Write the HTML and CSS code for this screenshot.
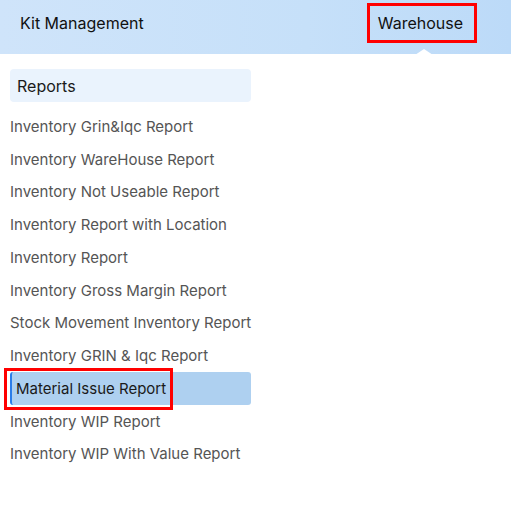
FILE: index.html
```html
<!DOCTYPE html>
<html>
<head>
<meta charset="utf-8">
<link rel="stylesheet" href="styles.css">
</head>
<body>
<header class="topbar">
  <div class="tab">Kit Management</div>
  <div class="tab tab-active"><span class="hl hl-warehouse">Warehouse</span><span class="caret"></span></div>
</header>
<aside class="sidebar">
  <div class="section-title">Reports</div>
  <ul class="menu">
    <li class="item">Inventory Grin&amp;Iqc Report</li>
    <li class="item">Inventory WareHouse Report</li>
    <li class="item">Inventory Not Useable Report</li>
    <li class="item">Inventory Report with Location</li>
    <li class="item">Inventory Report</li>
    <li class="item">Inventory Gross Margin Report</li>
    <li class="item">Stock Movement Inventory Report</li>
    <li class="item">Inventory GRIN &amp; Iqc Report</li>
    <li class="item item-active"><span class="hl hl-item">Material Issue Report</span></li>
    <li class="item">Inventory WIP Report</li>
    <li class="item">Inventory WIP With Value Report</li>
  </ul>
</aside>
</body>
</html>
```
FILE: styles.css
```css
* { box-sizing: border-box; }
html, body { margin: 0; padding: 0; background: #fff; }
body {
  font-family: Inter, "Noto Sans", sans-serif;
  width: 511px;
  height: 515px;
  overflow: hidden;
}
.topbar {
  height: 54px;
  background: linear-gradient(90deg, #cfe4fa 0%, #c6e0f9 60%, #bcdaf8 100%);
  display: flex;
  align-items: center;
  justify-content: space-between;
  padding: 0 48px 0 20px;
  font-size: 16px;
  color: #111;
}
.tab { position: relative; line-height: 20px; padding-bottom: 8px; }
.hl {
  position: relative;
}
.hl::after {
  content: "";
  position: absolute;
  border: 3px solid #f00;
}
.hl-warehouse::after { left: -11px; right: -14px; top: -10px; bottom: -10px; }
.caret {
  position: absolute;
  left: 31px;
  top: 36px;
  width: 0; height: 0;
  border-left: 15px solid transparent;
  border-right: 15px solid transparent;
  border-bottom: 10px solid #fff;
}
.sidebar {
  width: 241px;
  margin: 15px 0 0 10px;
}
.section-title {
  height: 33px;
  background: #eaf3fd;
  border-radius: 4px;
  padding-left: 7px;
  display: flex;
  align-items: center;
  font-size: 16px;
  color: #1a1a1a;
  margin-bottom: 8px;
}
.menu { list-style: none; margin: 0; padding: 0; }
.item {
  height: 32.75px;
  display: flex;
  align-items: center;
  font-size: 15px;
  color: #555;
  white-space: nowrap;
}
.item-active {
  background: #aed0f0;
  border-radius: 3px;
  border-left: 2px solid #2b7de9;
  padding-left: 4px;
  color: #1a1a1a;
}
.hl-item::after { left: -12px; right: -7px; top: -11px; bottom: -12px; }
```
